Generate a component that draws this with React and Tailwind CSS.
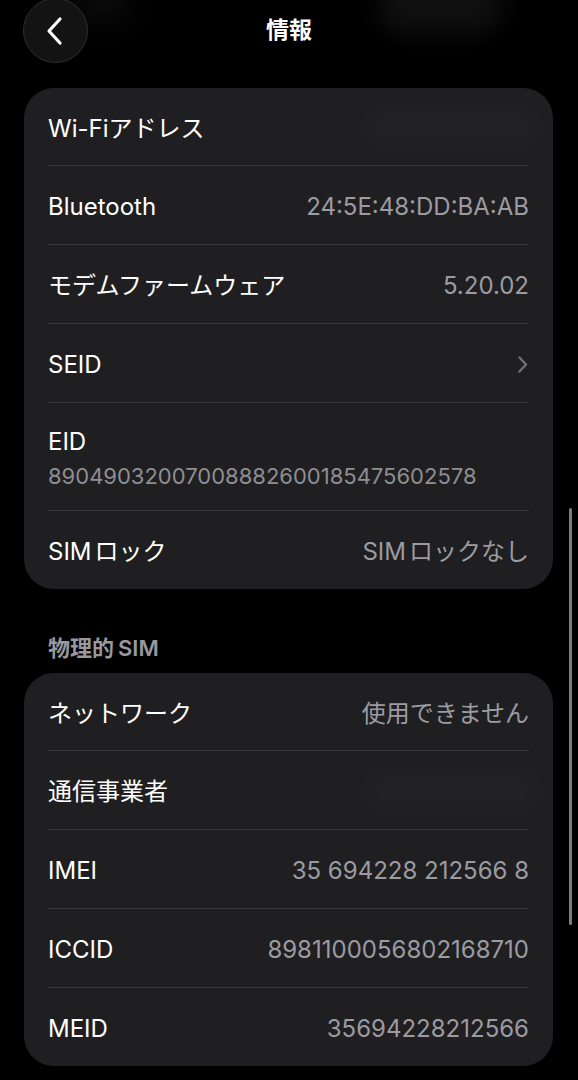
import React from "react";

const font = { fontFamily: '"Inter", "Noto Sans CJK JP", sans-serif' };

function Row({ label, value, chevron, first, blur }) {
  return (
    <div
      className={`relative flex items-center justify-between pt-[4px] ${
        first ? "h-[77px]" : "h-[79px] border-t border-[#38383a]"
      }`}
    >
      <span className="text-[24px] text-white">{label}</span>
      {value && <span className="text-[24px] text-[#9b9ba1]">{value}</span>}
      {chevron && (
        <svg width="10" height="17" viewBox="0 0 10 17" className="mr-[1px] mb-[2px]">
          <path
            d="M1.5 1.5 L8 8.5 L1.5 15.5"
            fill="none"
            stroke="#6f6f75"
            strokeWidth="2.4"
            strokeLinecap="round"
            strokeLinejoin="round"
          />
        </svg>
      )}
      {blur && (
        <div className="absolute right-[-8px] top-[20px] h-[38px] w-[170px] rounded-xl bg-[#29292c] blur-md opacity-30" />
      )}
    </div>
  );
}

export default function App() {
  return (
    <div className="relative h-[1080px] w-full overflow-hidden bg-black" style={font}>
      {/* blurred content behind the nav bar */}
      <div className="absolute left-[75px] top-[-30px] h-[55px] w-[55px] rounded-full bg-[#1a1a1a] blur-lg opacity-50" />
      <div className="absolute right-[75px] top-[-22px] h-[55px] w-[125px] rounded-[28px] bg-[#141414] blur-md opacity-80" />

      {/* Header */}
      <div className="relative flex h-[88px] items-start">
        <div className="absolute left-[23px] top-[-2px] flex h-[65px] w-[65px] items-center justify-center rounded-full border border-[#2e2e2e] bg-[#131313]">
          <svg width="20" height="30" viewBox="0 0 20 30" className="mr-[2px]">
            <path
              d="M15 3 L4 15 L15 27"
              fill="none"
              stroke="#ffffff"
              strokeWidth="3.2"
              strokeLinecap="round"
              strokeLinejoin="round"
            />
          </svg>
        </div>
        <div className="w-full pt-[15px] text-center text-[23px] font-bold leading-[30px] text-white">
          情報
        </div>
      </div>

      {/* Card 1 */}
      <div className="ml-[24px] mr-[25px] rounded-[30px] bg-[#1f1f21] px-[24px]">
        <Row first label="Wi-Fiアドレス" blur />
        <Row label="Bluetooth" value="24:5E:48:DD:BA:AB" />
        <Row label="モデムファームウェア" value="5.20.02" />
        <Row label="SEID" chevron />
        <div className="flex h-[108px] flex-col justify-center border-t border-[#38383a] pt-[4px]">
          <span className="text-[24px] leading-[30px] text-white">EID</span>
          <span className="mt-[4px] text-[22px] leading-[30px] text-[#8e8e93]">
            89049032007008882600185475602578
          </span>
        </div>
        <Row
          label={
            <>
              SIM<span className="ml-[3px]">ロック</span>
            </>
          }
          value={
            <>
              SIM<span className="ml-[3px]">ロックなし</span>
            </>
          }
        />
      </div>

      {/* Section header */}
      <div className="px-[48px] pt-[46px] pb-[12px] text-[22px] font-semibold leading-[26px] text-[#98989e]">
        物理的<span className="ml-[4px]">SIM</span>
      </div>

      {/* Card 2 */}
      <div className="ml-[24px] mr-[25px] rounded-[30px] bg-[#1f1f21] px-[24px]">
        <Row first label="ネットワーク" value="使用できません" />
        <Row label="通信事業者" blur />
        <Row label="IMEI" value="35 694228 212566 8" />
        <Row label="ICCID" value="8981100056802168710" />
        <Row label="MEID" value="35694228212566" />
      </div>

      {/* Scroll indicator */}
      <div className="absolute right-[6px] top-[508px] h-[417px] w-[3px] rounded-full bg-[#7c7c7c]" />
    </div>
  );
}
